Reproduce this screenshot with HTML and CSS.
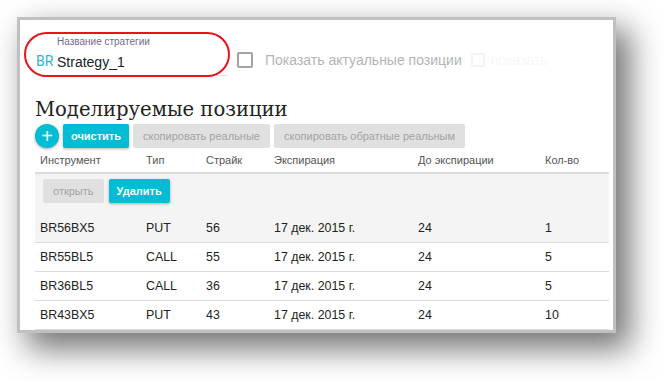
FILE: index.html
```html
<!DOCTYPE html>
<html lang="ru">
<head>
    <meta charset="UTF-8">
    <meta name="viewport" content="width=device-width, initial-scale=1.0">
    <title>Моделируемые позиции</title>
    <link rel="stylesheet" href="styles.css">
</head>
<body>
    <div class="frame">
        <div class="highlight"></div>

        <div class="top">
            <div class="field">
                <span class="prefix">BR</span>
                <div class="field-body">
                    <label class="field-label" for="name">Название стратегии</label>
                    <input class="field-input" id="name" type="text" value="Strategy_1">
                </div>
            </div>
            <label class="check">
                <span class="box"></span>
                <span>Показать актуальные позиции</span>
            </label>
            <label class="check faint">
                <span class="box"></span>
                <span>показать</span>
            </label>
        </div>

        <h2>Моделируемые позиции</h2>

        <div class="toolbar">
            <button class="fab" type="button">+</button>
            <button class="btn primary" type="button">очистить</button>
            <button class="btn copy" type="button" disabled>скопировать реальные</button>
            <button class="btn" type="button" disabled>скопировать обратные реальным</button>
        </div>

        <div class="table">
            <div class="row head">
                <div>Инструмент</div>
                <div>Тип</div>
                <div>Страйк</div>
                <div>Экспирация</div>
                <div>До экспирации</div>
                <div>Кол-во</div>
            </div>
            <div class="actions">
                <button class="btn" type="button" disabled>открыть</button>
                <button class="btn primary" type="button">Удалить</button>
            </div>
            <div class="row selected">
                <div>BR56BX5</div>
                <div>PUT</div>
                <div>56</div>
                <div>17 дек. 2015 г.</div>
                <div>24</div>
                <div>1</div>
            </div>
            <div class="row">
                <div>BR55BL5</div>
                <div>CALL</div>
                <div>55</div>
                <div>17 дек. 2015 г.</div>
                <div>24</div>
                <div>5</div>
            </div>
            <div class="row">
                <div>BR36BL5</div>
                <div>CALL</div>
                <div>36</div>
                <div>17 дек. 2015 г.</div>
                <div>24</div>
                <div>5</div>
            </div>
            <div class="row">
                <div>BR43BX5</div>
                <div>PUT</div>
                <div>43</div>
                <div>17 дек. 2015 г.</div>
                <div>24</div>
                <div>10</div>
            </div>
        </div>
    </div>
</body>
</html>
```

FILE: styles.css
```css
body {
    margin: 0;
    padding: 0;
    min-height: 381px;
    background-color: #fff;
    font-family: "Liberation Sans", Arial, sans-serif;
    color: #222;
}

.frame {
    position: relative;
    box-sizing: border-box;
    width: 599px;
    height: 316px;
    margin: 17px 0 0 17px;
    padding: 0 4px 0 15px;
    border: 3px solid #c0c0c0;
    background-color: #fff;
    box-shadow: 12px 14px 30px 2px rgba(0, 0, 0, 0.55);
    overflow: hidden;
}

.highlight {
    position: absolute;
    left: 4px;
    top: 12px;
    width: 206px;
    height: 45px;
    box-sizing: border-box;
    border: 2px solid #e8141b;
    border-radius: 23px;
}

.top {
    display: flex;
    align-items: flex-end;
    padding-top: 16px;
}

.field {
    display: flex;
    align-items: flex-end;
    width: 193px;
}

.prefix {
    width: 21px;
    padding-left: 1px;
    padding-bottom: 6px;
    font-family: Roboto, "Liberation Sans", sans-serif;
    font-size: 14px;
    line-height: 18px;
    color: #2bb7d0;
}

.field-body {
    flex: 1;
    border-bottom: 1px solid #e2e2e2;
}

.field-label {
    display: block;
    font-size: 10px;
    line-height: 12px;
    color: #76688a;
}

.field-input {
    display: block;
    width: 100%;
    box-sizing: border-box;
    margin: 0;
    padding: 5px 0 4px;
    border: none;
    outline: none;
    font-family: inherit;
    font-size: 14px;
    line-height: 18px;
    color: #222;
    background: transparent;
}

.check {
    display: flex;
    align-items: center;
    gap: 12px;
    margin-left: 9px;
    padding-bottom: 7px;
    font-size: 14px;
    line-height: 18px;
    color: #b4b4b4;
}

.box {
    width: 12px;
    height: 12px;
    border: 2px solid #a2a2a2;
    border-radius: 2px;
}

.check.faint {
    margin-left: 9px;
    gap: 6px;
    color: #f7f7f7;
}

    .check.faint .box {
        width: 10px;
        height: 10px;
        border-color: #f3f3f3;
    }

h2 {
    margin: 21px 0 1px;
    font-family: "DejaVu Serif", "Liberation Serif", serif;
    font-weight: normal;
    font-size: 19.6px;
    line-height: 26px;
    color: #222;
}

.toolbar {
    display: flex;
    gap: 4px;
    height: 24px;
}

.btn {
    height: 24px;
    padding: 0 10px;
    border: none;
    border-radius: 2px;
    background-color: #e0e0e0;
    color: #a3a3a3;
    font-family: inherit;
    font-size: 11px;
}

    .btn.primary {
        padding: 0 8px;
        background-color: #00bcd4;
        color: #fff;
        font-weight: bold;
        box-shadow: 0 1px 3px rgba(0, 0, 0, 0.3);
        cursor: pointer;
    }

    .btn.copy {
        min-width: 137px;
    }

.fab {
    width: 24px;
    height: 24px;
    padding: 0;
    border: none;
    border-radius: 50%;
    background-color: #00bcd4;
    color: #fff;
    font-family: inherit;
    font-size: 20px;
    line-height: 22px;
    box-shadow: 0 1px 3px rgba(0, 0, 0, 0.35);
}

.table {
    width: 574px;
}

.row {
    display: grid;
    grid-template-columns: 106px 60px 68px 144px 127px 64px;
    align-items: center;
    height: 28px;
    padding-left: 5px;
    border-bottom: 1px solid #dcdcdc;
    font-size: 12.4px;
}

.row.head {
    height: 24px;
    border-bottom: 2px solid #dcdcdc;
    font-size: 11px;
    color: #555;
}

.row.selected,
.actions {
    background-color: #f4f4f4;
}

.actions {
    display: flex;
    gap: 5px;
    height: 40px;
    box-sizing: border-box;
    padding: 5px 0 0 8px;
}
```
